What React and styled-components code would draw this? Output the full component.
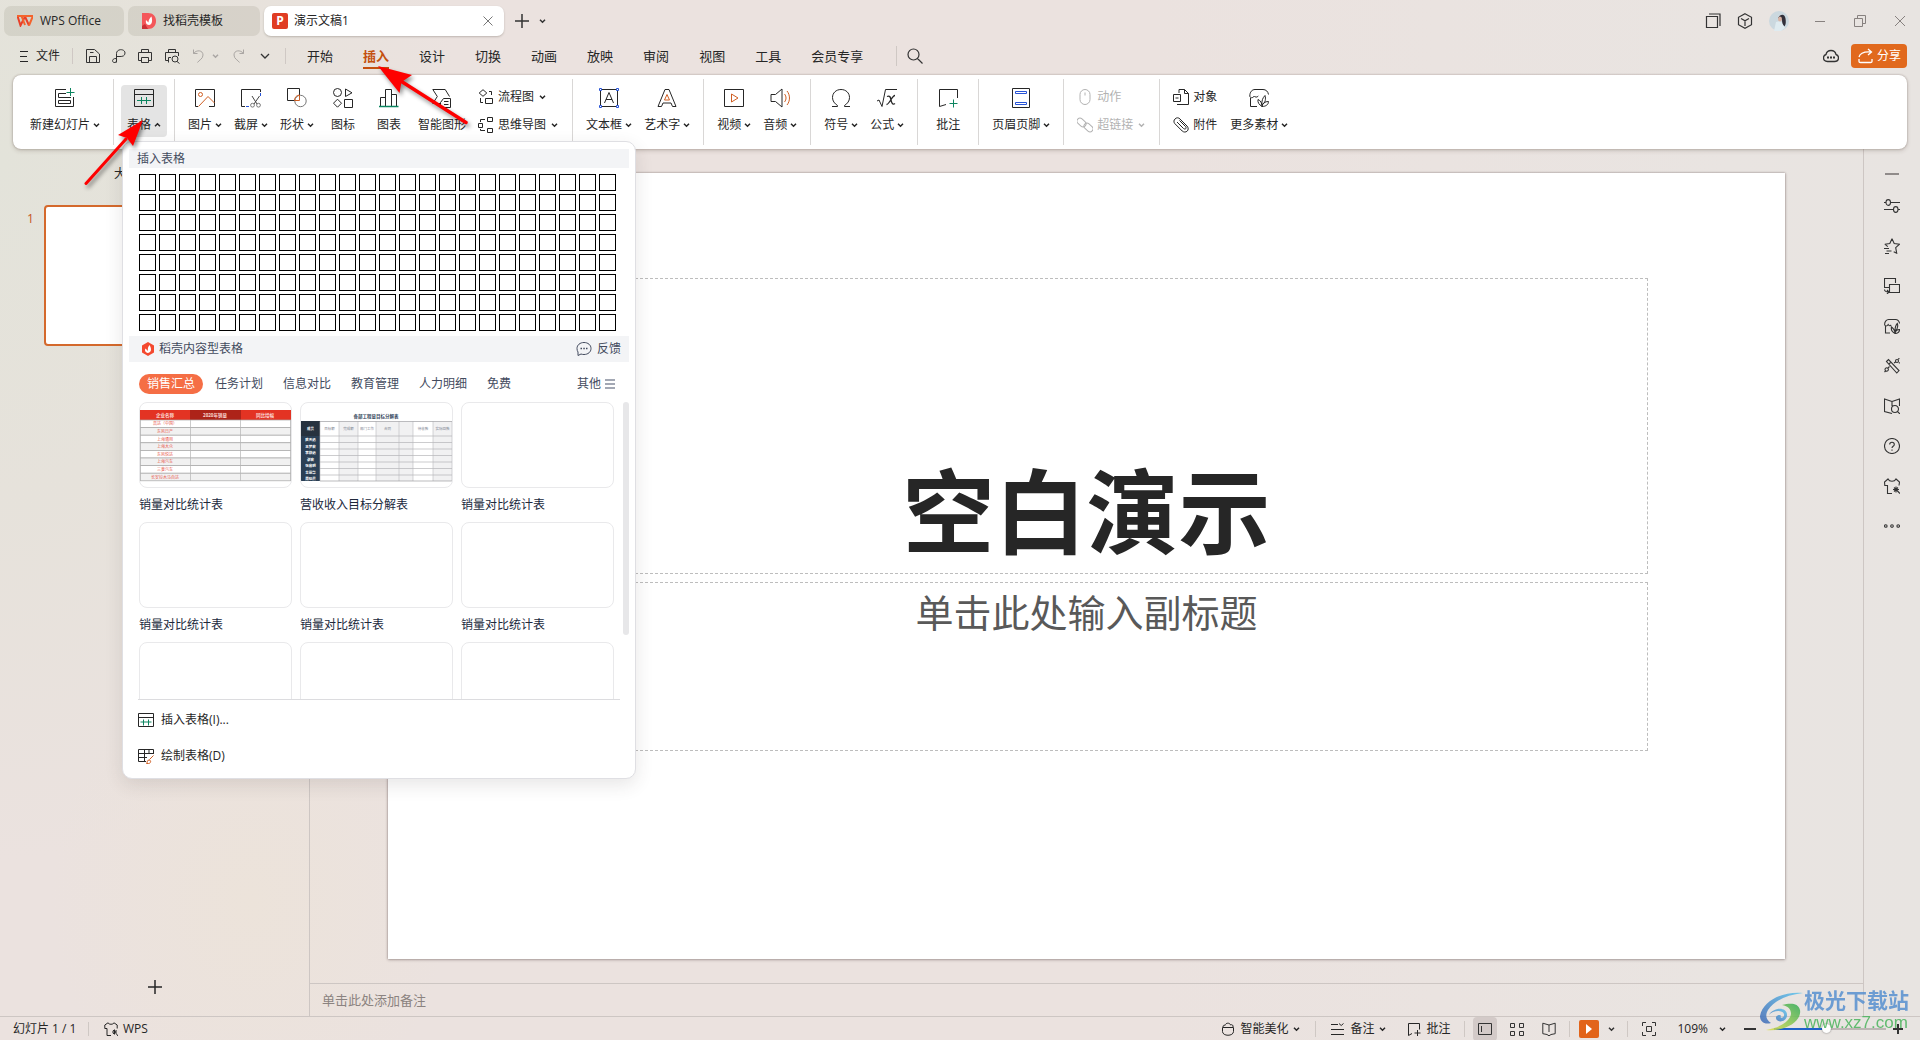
import React from "react";
import styled, { createGlobalStyle, css } from "styled-components";

const GlobalStyle = createGlobalStyle`
  * {
    box-sizing: border-box;
  }
  body {
    margin: 0;
    font-family: "Open Sans", "Noto Sans CJK SC", sans-serif;
    font-size: 12px;
    line-height: 16px;
    color: #262626;
  }
  button, input {
    font: inherit;
    color: inherit;
    border: none;
    background: none;
    padding: 0;
    margin: 0;
  }
  a {
    color: inherit;
    text-decoration: none;
  }
`;

const GREEN = "#0c8560";
const ORANGE = "#cf5e22";
const BLUE = "#2753d6";

const Svg = styled.svg`
  display: block;
  flex: none;
  fill: none;
  stroke: currentColor;
  stroke-width: ${(p) => p.$w || 1};
`;

const Icon = ({ size = 16, w, children }) => (
  <Svg width={size} height={size} viewBox={`0 0 ${size} ${size}`} $w={w} aria-hidden="true">
    {children}
  </Svg>
);

const Caret = ({ up }) => (
  <Svg width="7" height="6" viewBox="0 0 7 6" $w={1.5} aria-hidden="true">
    <path d={up ? "M1 4.2l2.5-2.4L6 4.2" : "M1 1.8l2.5 2.4L6 1.8"} />
  </Svg>
);

/* ---------- ribbon icons, 20 x 20 (16 x 16 for the stacked ones) ---------- */

const icons = {
  newSlide: (
    <>
      <path d="M11 1.5H.5v17h18V9M11 5.5H3.5v4H16M3.5 12.5h12v3h-12z" />
      <path stroke={GREEN} d="M15.5 0v8M11.5 4.5h8" />
    </>
  ),
  table: (
    <>
      <path d="M.5 1.5h19v17H.5zM.5 6.5h19" />
      <path stroke={GREEN} d="M3 12.5h14M7.5 9v7M12.500 9v7" />
    </>
  ),
  picture: (
    <>
      <path d="M3 18.5H.5v-17h19v17H14" />
      <circle cx="5.5" cy="6.5" r="2" stroke={ORANGE} />
      <path stroke={ORANGE} d="M3.5 18.5l9.5-10 6.5 6.5" />
    </>
  ),
  screenshot: (
    <>
      <path d="M4 18.5H.5v-17h19V4" />
      <path stroke={BLUE} d="M19.5 5v3M5 18.5h3" />
      <path d="M11 8l5 8M18.5 8L13 16" stroke="#444" />
      <circle cx="11.5" cy="17.2" r="1.9" stroke="#777" />
      <circle cx="17.5" cy="17.2" r="1.9" stroke="#777" />
    </>
  ),
  shapes: (
    <>
      <path d="M8 12.5H.5V.5h12V7" />
      <circle cx="13.5" cy="13" r="5.7" stroke="#777" />
      <path d="M7.5 12.5c0-3 2-5.3 5-5.5v5.5z" stroke={ORANGE} />
    </>
  ),
  glyphs: (
    <>
      <circle cx="4.5" cy="4.5" r="4" />
      <path d="M12.5 1v7.5L19 4.8zM4.5 11.2l4 4-4 4-4-4zM11.5 11.5h8v8h-8z" />
    </>
  ),
  chart: (
    <>
      <path d="M1.5 18V9.5h5M6.5 18V1.5h6V18M12.5 6.5h5V18" />
      <path stroke={GREEN} strokeWidth="1.5" d="M0 18.5h19.5" />
    </>
  ),
  smart: (
    <>
      <path d="M8 15.5H.8l4.5-7-4.500-7h12.400l4.300 7" />
      <path d="M8.5 14.5l3-4h7v9h-10zM12 13.5h4.500M12 16.5h4.500" />
    </>
  ),
  textBox: (
    <>
      <path d="M3 1.5h14M3 18.5h14M1.5 3v14M18.5 3v14M5.5 15L10 4.500 14.500 15M7 11.5h6" />
      <path stroke={BLUE} d="M.5.5h2v2h-2zM17.5.5h2v2h-2zM.5 17.5h2v2h-2zM17.5 17.5h2v2h-2z" />
    </>
  ),
  wordArt: (
    <>
      <path d="M1 18.5l7-17h4l7 17h-3.500L14 15H6l-1.500 3.500z" />
      <path stroke={ORANGE} d="M10 6.5l2.500 5.500h-5z" />
    </>
  ),
  video: (
    <>
      <path d="M.5 1.5h19v17H.5z" />
      <path stroke={ORANGE} d="M7.5 6l6.500 4-6.500 4z" />
    </>
  ),
  audio: (
    <>
      <path d="M1 6.5h4.500L12 1v18l-6.500-5.500H1z" />
      <path stroke={ORANGE} d="M14.5 6c2 2.4 2 5.6 0 8M17 3c3.3 4 3.3 10 0 14" />
    </>
  ),
  omega: (
    <path d="M1 18.5h5.500v-1c-3-2-5-4.500-5-8 0-4.500 3.500-8 8.500-8s8.500 3.500 8.500 8c0 3.500-2 6-5 8v1H19" />
  ),
  formula: (
    <>
      <path d="M0 13l2-1 3 6.500 3.500-17H20" />
      <path strokeWidth="1.3" d="M10 8.5c3-1.5 3.5 1 4 3.5s1.500 5.500 4 3.500M18 7.500c-3 0-5.500 9-8.500 9" />
    </>
  ),
  comment: (
    <>
      <path d="M8 16.500l-6.500 2v-17h18V10" />
      <path stroke={GREEN} d="M15.5 11.5v8M11.500 15.5h8" />
    </>
  ),
  headerFooter: (
    <>
      <path d="M1.5.5h17v19h-17z" />
      <path stroke={BLUE} d="M4.5 3.5h11v2h-11zM4.500 14.5h11v2h-11z" />
    </>
  ),
  store: (
    <>
      <path d="M.8 8C.8 4 3 1.5 6 1.5h8c3 0 5 2 5.500 5M.8 8c0 2 3 2.500 4.500 0 1 1.500 2.500 1.500 4 0M1.500 10v8.500H8" />
      <path d="M13 18.500c-3-2-4.500-4-4-7 2.500 1 4 3.500 4 7zM13 17c-.5-4 .5-7 3-9.500 1 3.500.5 7-3 9.500zM13 18.500c.5-3.500 3-5 6.500-5 0 3-2.500 5-6.500 5z" />
    </>
  ),
  flow: <path d="M5 .7L8.8 4 5 7.300 1.200 4zM11 2.5h2.500V6M2.500 9v4.500H5M7.500 9.500h7v5h-7z" />,
  mind: <path d="M9.5.5h5v4h-5zM9.500 11.5h5v4h-5zM.5 6.5h4v4h-4zM2.500 5V2.500H7M2.500 12v1.500H7" />,
  mouse: (
    <>
      <rect x="3" y=".5" width="10" height="15" rx="5" />
      <path d="M8 3.5v3" />
    </>
  ),
  link: (
    <>
      <rect x="-.5" y="2.5" width="10" height="6" rx="3" transform="rotate(42 4.5 5.5)" />
      <rect x="6.5" y="7.5" width="10" height="6" rx="3" transform="rotate(42 11.5 10.5)" />
    </>
  ),
  object: (
    <>
      <path d="M6 4V.5h5.500l4 4v11H4M11.500.5v4h4" />
      <path d="M.5 5.5h7v7h-7zM2.500 9h3" />
    </>
  ),
  clip: (
    <path d="M2 2c1.500-1.700 3.700-1.500 5 0l7 7c3.500 4-1.500 8-4.800 5L1.700 6.500C.5 5 .8 3 2 2zM4 5l6.500 6.500c2 1.500 3.500-.5 2-2l-6-6" />
  ),
};

/* ---------- title bar ---------- */

const Page = styled.div`
  min-height: 100vh;
  display: flex;
  flex-direction: column;
  position: relative;
  overflow: hidden;
  background:
    radial-gradient(ellipse 460px 700px at 0 160px, #e3e3da 0%, rgba(229, 226, 218, 0.8) 50%, rgba(235, 227, 224, 0) 100%),
    radial-gradient(ellipse 200px 240px at 250px 900px, #ece3da 0%, rgba(236, 227, 218, 0) 100%),
    linear-gradient(90deg, #ebe2df 0%, #ebe2df 60%, #e9e4e1 90%, #e8e4e1 100%);
`;

const TitleBar = styled.header`
  height: 40px;
  display: flex;
  align-items: center;
  padding: 2px 0 0 4px;
`;

const DocTab = styled.a`
  height: 30px;
  width: ${(p) => p.$width}px;
  margin-right: 4px;
  padding: 0 ${(p) => (p.$active ? 10 : 12)}px 0 ${(p) => p.$left}px;
  display: flex;
  align-items: center;
  gap: ${(p) => p.$gap}px;
  border-radius: 7px;
  background: ${(p) => (p.$active ? "#fff" : "rgba(120, 110, 95, 0.14)")};
  box-shadow: ${(p) => (p.$active ? "0 1px 2px rgba(60, 50, 40, 0.25)" : "none")};
`;

const Spacer = styled.div`
  flex: 1;
`;

const PptBadge = styled.span`
  width: 16px;
  height: 16px;
  border-radius: 2px;
  background: #e03c23;
  color: #fff;
  font-weight: 700;
  text-align: center;
`;

const IconButton = styled.button`
  width: ${(p) => p.$width || 24}px;
  height: 24px;
  display: flex;
  align-items: center;
  justify-content: center;
  flex: none;
  color: ${(p) => p.$color || "#333"};
  border-radius: 4px;
  background: ${(p) => p.$bg || "none"};
`;

/* ---------- menu bar ---------- */

const MenuBar = styled.nav`
  height: 32px;
  margin-bottom: 3px;
  padding: 0 13px 0 15px;
  display: flex;
  align-items: center;
`;

const FileButton = styled.button`
  display: flex;
  align-items: center;
  gap: 5px;
  padding: 0 12px 0 2px;
`;

const Divider = styled.span`
  width: 1px;
  height: ${(p) => p.$height || 16}px;
  margin: ${(p) => p.$margin || "0"};
  flex: none;
  background: #cfc8c4;
`;

const MenuTab = styled.a`
  position: relative;
  height: 32px;
  line-height: 32px;
  padding: 0 15px;
  font-size: 13px;
  ${(p) =>
    p.$active &&
    css`
      color: #c4500f;
      font-weight: 700;
      &::after {
        content: "";
        position: absolute;
        left: 15px;
        right: 15px;
        bottom: 3px;
        height: 2px;
        background: #c4500f;
      }
    `}
`;

const ShareButton = styled.button`
  height: 24px;
  padding: 0 6px;
  margin-left: 8px;
  display: flex;
  align-items: center;
  gap: 4px;
  border-radius: 4px;
  background: #e1691d;
  color: #fff;
`;

/* ---------- ribbon ---------- */

const Ribbon = styled.section`
  height: 74px;
  margin: 0 13px;
  padding: 4px 0;
  display: flex;
  border-radius: 8px;
  background: #fff;
  box-shadow: 0 0 2px rgba(80, 60, 50, 0.45), 0 2px 4px rgba(80, 60, 50, 0.2);
  position: relative;
  z-index: 5;
`;

const RibbonGroup = styled.div`
  display: flex;
  align-items: center;
  padding: 0 7px 2px;
  border-right: 1px solid #d9d7d6;
  &:first-child {
    padding-left: 11px;
  }
  &:last-child {
    border-right: none;
  }
`;

const RibbonButton = styled.button`
  min-width: 46px;
  height: 52px;
  padding: 3px 6px 0;
  display: flex;
  flex-direction: column;
  align-items: center;
  gap: 9px;
  border-radius: 4px;
  background: ${(p) => (p.$open ? "#e4e4e4" : "none")};
`;

const RibbonLabel = styled.span`
  display: flex;
  align-items: center;
  gap: ${(p) => (p.$wide ? 5 : 3)}px;
  white-space: nowrap;
`;

const RibbonStack = styled.div`
  display: flex;
  flex-direction: column;
  color: ${(p) => (p.$disabled ? "#b2b2b2" : "inherit")};
`;

const StackButton = styled.button`
  height: 28px;
  padding: 0 7px 0 6px;
  display: flex;
  align-items: center;
  gap: 4px;
  &:disabled {
    color: inherit;
  }
`;

const Tool = ({ icon, label, menu, open }) => (
  <RibbonButton $open={open}>
    <Icon size={20}>{icons[icon]}</Icon>
    <RibbonLabel>
      {label}
      {menu && <Caret up={open} />}
    </RibbonLabel>
  </RibbonButton>
);

const SmallTool = ({ icon, label, menu, disabled }) => (
  <StackButton disabled={disabled}>
    <Icon>{icons[icon]}</Icon>
    <RibbonLabel $wide>
      {label}
      {menu && <Caret />}
    </RibbonLabel>
  </StackButton>
);

/* ---------- table drop-down ---------- */

const MenuAnchor = styled.div`
  position: relative;
`;

const TablePanel = styled.div`
  position: absolute;
  top: calc(100% + 4px);
  left: 1px;
  width: 514px;
  height: 638px;
  padding: 7px 6px 0;
  border: 1px solid #dfdfe3;
  border-radius: 10px;
  background: #fff;
  box-shadow: 0 6px 18px rgba(60, 50, 50, 0.12);
`;

const PanelHeading = styled.h2`
  height: ${(p) => p.$height}px;
  margin: 0;
  padding: 0 8px;
  display: flex;
  align-items: center;
  font-size: 12px;
  font-weight: 400;
  background: #f3f4f6;
  color: #434b5e;
`;

const Feedback = styled.a`
  margin-left: auto;
  display: flex;
  align-items: center;
  gap: 5px;
`;

const CellGrid = styled.div`
  display: grid;
  grid-template-columns: repeat(24, 17px);
  grid-auto-rows: 17px;
  gap: 3px;
  padding: 6px 10px 5px;
`;

const Cell = styled.button`
  border: 1px solid #000;
`;

const Categories = styled.div`
  display: flex;
  align-items: center;
  gap: 4px;
  height: 40px;
  padding: 4px 14px 0 10px;
  color: #434b5e;
`;

const Category = styled.button`
  height: 20px;
  padding: 0 8px;
  border-radius: 10px;
  ${(p) =>
    p.$active &&
    css`
      background: #f56e45;
      color: #fff;
    `}
`;

const More = styled.button`
  margin-left: auto;
  display: flex;
  align-items: center;
  gap: 4px;
`;

const CardScroller = styled.div`
  height: 298px;
  margin: 0 9px;
  padding-left: 1px;
  overflow: hidden;
  border-bottom: 1px solid #dcdcdf;
  display: grid;
  grid-template-columns: repeat(3, 153px);
  grid-auto-rows: 112px;
  gap: 8px;
`;

const ScrollThumb = styled.div`
  position: absolute;
  right: 6px;
  top: 260px;
  width: 6px;
  height: 233px;
  border-radius: 3px;
  background: #e7e7e9;
`;

const Card = styled.figure`
  margin: 0;
`;

const CardPreview = styled.div`
  height: 86px;
  border: 1px solid #e9e9eb;
  border-radius: 8px;
  overflow: hidden;
`;

const CardName = styled.figcaption`
  height: 26px;
  padding-top: 9px;
  color: #20283b;
`;

const PanelActions = styled.div`
  padding: 2px 9px;
`;

const PanelAction = styled.button`
  height: 36px;
  display: flex;
  align-items: center;
  gap: 7px;
`;

const salesRows = ["高达（中国）", "东风日产", "上海通用", "上海大众", "东风悦达", "上海汽车", "三菱汽车", "长安铃木马自达"];
const goalRows = ["陈天迅", "王梦宏", "李静远", "谢宏", "张启明", "金丽华", "周晓晨"];
const goalCols = [19, 38, 57, 75, 98, 112, 132, 151];

const SalesPreview = () => (
  <svg width="151" height="84" viewBox="0 0 151 84" aria-hidden="true">
    <rect y="7" width="151" height="10" fill="#e33323" />
    <rect x="50" y="7" width="51" height="10" fill="#ad2319" />
    {["企业名称", "2020年销量", "同比增幅"].map((t, i) => (
      <text key={t} x={25 + i * 50} y="14" fontSize="4.5" fontWeight="700" fill="#fbd9d5" textAnchor="middle">
        {t}
      </text>
    ))}
    {salesRows.map((t, i) => (
      <g key={t}>
        <rect y={17 + i * 7.6} width="151" height="7.6" fill={i % 2 ? "#f1f1f1" : "#fff"} stroke="#a5a5a5" strokeWidth=".7" />
        <text x="25" y={22.4 + i * 7.6} fontSize="4" fill="#e8564a" textAnchor="middle">
          {t}
        </text>
      </g>
    ))}
    <path d="M.5 17v61M50.5 17v61M100.5 17v61M150.5 17v61" stroke="#b5b5b5" strokeWidth=".7" />
  </svg>
);

const GoalPreview = () => (
  <svg width="151" height="84" viewBox="0 0 151 84" aria-hidden="true">
    <text x="75" y="15" fontSize="4.5" fontWeight="700" fill="#34475d" textAnchor="middle">
      各部工程量目标分解表
    </text>
    <path d="M38 19h19v59H38zM75 19h37v59H75zM132 19h19v59h-19z" fill="#f1f1f2" />
    <rect y="18" width="19" height="15" fill="#27323f" />
    <rect y="33" width="19" height="45" fill="#2b3f55" />
    <text x="9.5" y="27" fontSize="3.5" fontWeight="700" fill="#fff" textAnchor="middle">
      成员
    </text>
    {goalRows.map((t, i) => (
      <g key={t}>
        <text x="9.5" y={38 + i * 6.5} fontSize="3.5" fontWeight="700" fill="#fff" textAnchor="middle">
          {t}
        </text>
        <path d={`M19 ${33 + i * 6.5}H151`} stroke="#a9a9ad" strokeWidth=".6" />
      </g>
    ))}
    {["目标额", "完成额", "部门工作", "合同", "", "待收款", "实际回款"].map((t, i) => (
      <text key={i} x={(goalCols[i] + goalCols[i + 1]) / 2} y="27" fontSize="3.5" fill="#7f8794" textAnchor="middle">
        {t}
      </text>
    ))}
    <path d={goalCols.map((x) => `M${x} 18.5V78`).join("")} stroke="#b9b9bd" strokeWidth=".6" />
    <path d="M19 18.5h132M19 78h132" stroke="#8d8d92" strokeWidth=".6" />
  </svg>
);

const cards = [
  { name: "销量对比统计表", preview: <SalesPreview /> },
  { name: "营收收入目标分解表", preview: <GoalPreview /> },
  { name: "销量对比统计表" },
  { name: "销量对比统计表" },
  { name: "销量对比统计表" },
  { name: "销量对比统计表" },
  {},
  {},
  {},
];

const TableMenu = () => (
  <TablePanel>
    <PanelHeading $height={19}>插入表格</PanelHeading>
    <CellGrid>
      {Array.from({ length: 192 }, (_, i) => (
        <Cell key={i} aria-label={`${Math.floor(i / 24) + 1} x ${(i % 24) + 1}`} />
      ))}
    </CellGrid>
    <PanelHeading $height={26}>
      <Svg width="22" height="16" viewBox="-5 0 22 16" aria-hidden="true">
        <path d="M6 1l6 3.5v7L6 15l-6-3.500v-7z" fill="#f4492f" stroke="none" />
        <path d="M6 12c-3-.5-3.500-3-2.500-4.500L6 10c-.5-2.500 0-4 1.500-6 2 3.500 2.500 7-1.500 8z" fill="#fff" stroke="none" />
      </Svg>
      稻壳内容型表格
      <Feedback href="#feedback">
        <Icon>
          <path d="M8 1.5c4 0 7 2.500 7 6s-3 6-7 6c-1 0-2-.1-3-.5l-3 1.500V11c-.7-1-1-2.200-1-3.500 0-3.500 3-6 7-6z" />
          <path strokeWidth="1.5" d="M4.5 7.5H6M7.300 7.5h1.500M10 7.5h1.500" />
        </Icon>
        反馈
      </Feedback>
    </PanelHeading>
    <Categories>
      {["销售汇总", "任务计划", "信息对比", "教育管理", "人力明细", "免费"].map((name, i) => (
        <Category key={name} $active={i === 0}>
          {name}
        </Category>
      ))}
      <More>
        其他
        <Svg width="10" height="12" viewBox="0 0 10 12" $w={2} aria-hidden="true">
          <path stroke="#a3a8b4" d="M0 2h10M0 6h10M0 10h10" />
        </Svg>
      </More>
    </Categories>
    <CardScroller>
      {cards.map((card, i) => (
        <Card key={i}>
          <CardPreview>{card.preview}</CardPreview>
          {card.name && <CardName>{card.name}</CardName>}
        </Card>
      ))}
    </CardScroller>
    <ScrollThumb />
    <PanelActions>
      <PanelAction>
        <Icon>
          <path d="M.5 1.5h15v13H.5zM.5 5.5h15" />
          <path stroke={GREEN} d="M2.5 10h11M5.500 7.500v6M10.500 7.500v6" />
        </Icon>
        插入表格(I)...
      </PanelAction>
      <PanelAction>
        <Icon>
          <path d="M15.5 6V1.500H.5v12H8M.5 5.500h15M.5 9.500H9M6.500 1.500v12M11 1.500v4" />
          <path stroke={ORANGE} d="M15.500 7.500l-4 4M8.500 15.500c1 0 0-3.500 2.500-3.500 2.500 0 2 3.500-.5 3.500z" />
        </Icon>
        绘制表格(D)
      </PanelAction>
    </PanelActions>
  </TablePanel>
);

/* ---------- work area ---------- */

const Workspace = styled.main`
  flex: 1;
  display: flex;
`;

const Outline = styled.aside`
  width: 310px;
  border-right: 1px solid #cdc6c3;
  display: flex;
  flex-direction: column;
`;

const OutlineTabs = styled.div`
  padding: 17px 0 0 114px;
  display: flex;
  gap: 48px;
`;

const ThumbRow = styled.div`
  display: flex;
  margin-top: 23px;
  padding: 0 15px 0 27px;
  gap: 11px;
`;

const ThumbNumber = styled.span`
  width: 6px;
  padding-top: 6px;
  color: #c4541d;
`;

const Thumb = styled.div`
  flex: 1;
  aspect-ratio: 16 / 9;
  border: 2px solid #d4692c;
  border-radius: 4px;
  background: #fff;
`;

const AddSlide = styled.button`
  height: 58px;
  margin-top: auto;
  display: flex;
  align-items: center;
  justify-content: center;
`;

const Editor = styled.div`
  flex: 1;
  display: flex;
  flex-direction: column;
`;

const Canvas = styled.div`
  flex: 1;
  padding: 24px 78px;
`;

const Slide = styled.article`
  aspect-ratio: 16 / 9;
  padding: 105px 137px 208px;
  display: grid;
  grid-template-rows: 295fr 169fr;
  gap: 8px;
  background: #fff;
  box-shadow: 0 0 2px rgba(70, 50, 50, 0.5), 0 1px 3px rgba(70, 50, 50, 0.25);
`;

const Placeholder = styled.div`
  display: flex;
  justify-content: center;
  align-items: ${(p) => p.$align};
  padding: 6px;
  border: 1px dashed #bdbdbd;
`;

const SlideTitle = styled.h1`
  margin: 0;
  font-size: 92px;
  line-height: 110px;
  color: #262626;
`;

const SlideSubtitle = styled.p`
  margin: 0;
  font-size: 38px;
  line-height: 46px;
  color: #595959;
`;

const Notes = styled.input`
  height: 33px;
  padding: 0 12px;
  border-top: 1px solid #cdc6c3;
  font-size: 13px;
  &::placeholder {
    color: #8b8380;
    opacity: 1;
  }
`;

const SideBar = styled.aside`
  width: 57px;
  border-left: 1px solid #cdc6c3;
  padding-top: 13px;
  display: flex;
  flex-direction: column;
  align-items: center;
  gap: 16px;
`;

const Collapse = styled.button`
  width: 24px;
  height: 24px;
  margin-bottom: -8px;
  display: flex;
  align-items: center;
  justify-content: center;
  color: #908b8a;
`;

/* ---------- status bar ---------- */

const StatusBar = styled.footer`
  height: 24px;
  border-top: 1px solid #cdc6c3;
  padding: 0 14px 0 13px;
  display: flex;
  align-items: center;
`;

const SlideCount = styled.span`
  min-width: 66px;
  word-spacing: normal;
`;

const StatusButton = styled.button`
  display: flex;
  align-items: center;
  gap: 5px;
  margin-right: ${(p) => p.$right || 0}px;
`;

const ViewButtons = styled.div`
  display: flex;
  gap: 8px;
`;

const PlayButton = styled.button`
  width: 20px;
  height: 18px;
  display: flex;
  align-items: center;
  justify-content: center;
  border-radius: 2px;
  background: #e2641a;
  color: #fff;
`;

const ZoomLevel = styled.button`
  display: flex;
  align-items: center;
  gap: 11px;
  margin: 0 12px 0 16px;
`;

const ZoomRange = styled.input`
  appearance: none;
  width: 112px;
  height: 12px;
  margin: 0 4px 0 12px;
  background: linear-gradient(90deg, #1f62c9 0 50px, #bdb6b4 50px) center / 100% 2px no-repeat;
  &::-webkit-slider-thumb {
    appearance: none;
    width: 9px;
    height: 9px;
    border-radius: 50%;
    background: #fff;
    box-shadow: 0 0 2px rgba(0, 0, 0, 0.5);
  }
`;

const Watermark = styled.div`
  position: absolute;
  right: 11px;
  bottom: 6px;
  display: flex;
  align-items: center;
  gap: 1px;
  opacity: 0.85;
  pointer-events: none;
`;

const WatermarkText = styled.div`
  font-family: "Liberation Sans", "Noto Sans CJK SC", sans-serif;
  font-size: 21px;
  font-weight: 700;
  line-height: 22px;
  color: #5790d0;
`;

const WatermarkUrl = styled.div`
  font-size: 17px;
  font-weight: 400;
  color: #4ab45c;
`;

const Arrows = styled.svg`
  position: absolute;
  left: 70px;
  top: 56px;
  z-index: 20;
  pointer-events: none;
  filter: drop-shadow(2px 3px 2px rgba(0, 0, 0, 0.45));
`;

const sideIcons = [
  ["设置", "M0 4.5h2M6.500 4.5H16M0 11.5h9M14 11.5h2M2 4.5a2.200 2.800 0 104.500 0 2.200 2.800 0 10-4.500 0M9.500 11.5a2.200 2.800 0 104.500 0 2.200 2.800 0 10-4.500 0"],
  ["动画", "M8 .8l2.200 4.700 5.300.7-3.800 3.500 1 5.500-3-1.500M.8 6.200l3 2.500M8 .8L5.800 5.500.8 6.200M0 10.500h5M2.500 13h5M1 15.500h4"],
  ["切换", "M5 9.500H.5v-9h11V5M5.500 6.500h10v8h-10zM.5 11.500c0 2 1.500 2.500 4 2.500M3 12l2 2-2 2"],
  ["素材", "M.6 6.500c0-3 2-5 4-5h7c2 0 3.500 1.500 4 4M.6 6.500c.4 2 2.500 2 3.600 0 1 1.500 2 1.500 3 .5M1.500 8v7H6M11 15.500C8 14 7 11 7.500 9c2 1.500 3.500 3.500 3.500 6.500zM11 13c0-3.500.8-6 2.300-7.500C14.500 9 13.500 11 11 13zM11 15.500c.5-3 2-4 4.500-4 0 2.500-2 4-4.500 4z"],
  ["工具", "M2.500 3.500l2-2 10.500 11-2.200 2.500zM5 6l2-2M1 11.500a1.700 1.700 0 103.400 0 1.700 1.700 0 10-3.400 0M11.500 3a1.500 1.500 0 103 0 1.500 1.500 0 10-3 0M10 5l1.500-1M4 10l1.500-1.500M14 1l1.500-.5M15 4.500l.8.800M.5 14l1-1"],
  ["查找", "M8 3.500L.5 1v12.500L8 15.500M8 3.500L15.500 1v7M8 3.500V8M7.500 11a3.500 3.500 0 107 0 3.500 3.500 0 10-7 0M13.500 13.500l2.500 2.500"],
  ["帮助", "M.5 8a7.500 7.500 0 1015 0 7.500 7.500 0 10-15 0M5.700 6.500c0-3 4.600-3 4.600 0 0 1.800-2.300 1.800-2.300 3.500M8 11.500v1.200"],
  ["外观", "M8 15.500H3.500v-8H.8L.5 4 4 1c1.500 3 6.500 3 8 0l3.500 3-.5 3.500M9 11.500h6M12 8.500v6M10 9.500l4 4M14 9.500l-4 4M14 13.500l2 2"],
  ["更多", "M.5 8a1.300 1.300 0 102.600 0 1.300 1.300 0 10-2.600 0M6.700 8a1.300 1.300 0 102.600 0 1.300 1.300 0 10-2.600 0M12.900 8a1.300 1.300 0 102.600 0 1.300 1.300 0 10-2.600 0"],
];

const App = () => (
  <>
    <GlobalStyle />
    <Page>
      <TitleBar>
        <DocTab href="#home" $width={120} $left={13} $gap={7}>
          <Svg width="16" height="12" viewBox="0 0 16 12" $w={2} aria-hidden="true">
            <path stroke="#e8402a" d="M.5 1l3 9.500L8 1.500l4 9" />
            <path stroke="#f4632c" d="M0 1h16l-4 9.500M4.500 1l3.500 9" />
          </Svg>
          WPS Office
        </DocTab>
        <DocTab href="#templates" $width={132} $left={14} $gap={7}>
          <Svg width="14" height="16" viewBox="0 0 14 16" aria-hidden="true">
            <path d="M0 0h6c5 0 8 3.500 8 8s-3 8-8 8H0z" fill="#f4575a" stroke="none" />
            <path d="M0 16v-3l3-2 3 5z" fill="#c93036" stroke="none" />
            <path d="M7 12c-3 0-3.500-3-3-5l2.500 2.500C6.500 7 7.500 5 9.500 3.500c1 4 1 8-2.500 8.500z" fill="#fff" stroke="none" />
          </Svg>
          找稻壳模板
        </DocTab>
        <DocTab href="#deck" $active $width={240} $left={8} $gap={6}>
          <PptBadge>P</PptBadge>
          演示文稿1
          <Spacer />
          <Icon size={12}>
            <path stroke="#777" d="M1.5 1.5l9 9M10.500 1.5l-9 9" />
          </Icon>
        </DocTab>
        <IconButton $width={28} aria-label="新建">
          <Icon size={14} w={1.5}>
            <path d="M7 0v14M0 7h14" />
          </Icon>
        </IconButton>
        <IconButton $width={12} aria-label="标签列表">
          <Caret />
        </IconButton>
        <Spacer />
        <IconButton $width={38} aria-label="工作区">
          <Icon w={1.2}>
            <path d="M1.5 3.5h11v11h-11zM4 1h11v12" />
          </Icon>
        </IconButton>
        <IconButton $width={26} aria-label="应用">
          <Icon w={1.2}>
            <path d="M8 .8l6.500 3.500v7.400L8 15.200l-6.500-3.500V4.300zM4 5.500l4 2.200 4-2.200M8 7.500V13" />
          </Icon>
        </IconButton>
        <IconButton $width={42} aria-label="账号">
          <Icon size={20}>
            <circle cx="10" cy="10" r="10" fill="#cbd8df" stroke="none" />
            <path d="M5 20l2-9 4-1 4 3 1 4-4 3z" fill="#dfebf0" stroke="none" />
            <path d="M11 4.500c3-2 5 0 5.500 3 .5 3 .5 6-1 8-2-2-2.500-4-2.500-6.500L9 7z" fill="#33303a" stroke="none" />
            <ellipse cx="11" cy="8" rx="2" ry="2.500" fill="#d9b3a4" stroke="none" />
          </Icon>
        </IconButton>
        <IconButton $width={40} $color="#87817f" aria-label="最小化">
          <Icon size={12}>
            <path d="M1 6.5h10" />
          </Icon>
        </IconButton>
        <IconButton $width={40} $color="#87817f" aria-label="还原">
          <Icon size={12}>
            <path d="M.5 3.5h8v8h-8zM3.500 3V.5h8v8H9" />
          </Icon>
        </IconButton>
        <IconButton $width={40} $color="#87817f" aria-label="关闭">
          <Icon size={12}>
            <path d="M1 1l10 10M11 1L1 11" />
          </Icon>
        </IconButton>
      </TitleBar>

      <MenuBar>
        <FileButton>
          <Icon size={14}>
            <path d="M3 2.5h8M3 7.5h7M3 12.5h8" />
          </Icon>
          文件
        </FileButton>
        <Divider $margin="0 7px 0 0" />
        <IconButton $width={26} aria-label="保存">
          <Icon>
            <path d="M1.5 14.5v-13h8l5 4.500v8.500zM4.500 14V8.500h7V14M5 4.500h3.500" />
          </Icon>
        </IconButton>
        <IconButton $width={26} aria-label="输出">
          <Icon>
            <path d="M5.5 14.5v-9c0-5 8.500-5 8.500-.5 0 3-2.500 3.500-5 3.500H5.500M5.500 10.500c-5-.5-5 4.500-1.500 4 2-.3 1.500-2 1.500-4" />
          </Icon>
        </IconButton>
        <IconButton $width={26} aria-label="打印">
          <Icon>
            <path d="M4.5 4.5v-3h7v3M4 12.500H1.500v-8h13v8H12M4.500 9.500h7v5h-7z" />
          </Icon>
        </IconButton>
        <IconButton $width={27} aria-label="打印预览">
          <Icon>
            <path d="M4.5 4.5v-3h7v3M4 12.500H1.500v-8h13V8M4.500 14.500v-5H7M8 11a3 3 0 106 0 3 3 0 10-6 0M13 13.500l2.500 2" />
          </Icon>
        </IconButton>
        <IconButton $width={26} $color="#aaa6a3" aria-label="撤销">
          <Icon>
            <path d="M3.5 1.5v4h4M3.500 5.500c3-4 9.500-3.500 9.500 1.500 0 4-4 5-5.500 7.500" />
          </Icon>
        </IconButton>
        <IconButton $width={8} $color="#aaa6a3" aria-label="撤销列表">
          <Caret />
        </IconButton>
        <IconButton $width={40} $color="#aaa6a3" aria-label="重做">
          <Icon>
            <path d="M12.5 1.5v4h-4M12.500 5.500C9.500 1.500 3 2 3 7c0 4 4 5 5.500 7.500" />
          </Icon>
        </IconButton>
        <IconButton $width={12} aria-label="更多命令">
          <Icon size={10} w={1.3}>
            <path d="M1 3l4 4 4-4" />
          </Icon>
        </IconButton>
        <Divider $margin="0 6px 0 14px" />
        {["开始", "插入", "设计", "切换", "动画", "放映", "审阅", "视图", "工具", "会员专享"].map((name) => (
          <MenuTab key={name} href={`#${name}`} $active={name === "插入"}>
            {name}
          </MenuTab>
        ))}
        <Divider $height={20} $margin="0 6px 0 18px" />
        <IconButton aria-label="搜索">
          <Icon w={1.2}>
            <path d="M1 6.5a5.500 5.500 0 1011 0 5.500 5.500 0 10-11 0M10.500 10.500l5 5" />
          </Icon>
        </IconButton>
        <Spacer />
        <IconButton aria-label="云同步">
          <Icon w={1.3}>
            <path d="M4.5 13.5c-3 0-4-2-4-3.700 0-2 1.200-3 2.500-3.300.5-2.500 2.500-4 5-4s4.500 1.500 5 4c1.300.3 2.500 1.300 2.500 3.300 0 1.700-1 3.700-4 3.700z" />
            <path strokeWidth="2" d="M4 9.500h2M7 9.500h2M10 9.500h2" />
          </Icon>
        </IconButton>
        <ShareButton>
          <Icon w={1.3}>
            <path d="M2 9c1-4 5-5.500 12-5M11 1l3.500 3L11 7M2 11v2.500c0 1 .5 1 1.500 1h10c1 0 1.500 0 1.500-1V11" />
          </Icon>
          分享
        </ShareButton>
      </MenuBar>

      <Ribbon>
        <RibbonGroup>
          <Tool icon="newSlide" label="新建幻灯片" menu />
        </RibbonGroup>
        <RibbonGroup>
          <MenuAnchor>
            <Tool icon="table" label="表格" menu open />
            <TableMenu />
          </MenuAnchor>
        </RibbonGroup>
        <RibbonGroup>
          <Tool icon="picture" label="图片" menu />
          <Tool icon="screenshot" label="截屏" menu />
          <Tool icon="shapes" label="形状" menu />
          <Tool icon="glyphs" label="图标" />
          <Tool icon="chart" label="图表" />
          <Tool icon="smart" label="智能图形" />
          <RibbonStack>
            <SmallTool icon="flow" label="流程图" menu />
            <SmallTool icon="mind" label="思维导图" menu />
          </RibbonStack>
        </RibbonGroup>
        <RibbonGroup>
          <Tool icon="textBox" label="文本框" menu />
          <Tool icon="wordArt" label="艺术字" menu />
        </RibbonGroup>
        <RibbonGroup>
          <Tool icon="video" label="视频" menu />
          <Tool icon="audio" label="音频" menu />
        </RibbonGroup>
        <RibbonGroup>
          <Tool icon="omega" label="符号" menu />
          <Tool icon="formula" label="公式" menu />
        </RibbonGroup>
        <RibbonGroup>
          <Tool icon="comment" label="批注" />
        </RibbonGroup>
        <RibbonGroup>
          <Tool icon="headerFooter" label="页眉页脚" menu />
        </RibbonGroup>
        <RibbonGroup>
          <RibbonStack $disabled>
            <SmallTool icon="mouse" label="动作" disabled />
            <SmallTool icon="link" label="超链接" menu disabled />
          </RibbonStack>
        </RibbonGroup>
        <RibbonGroup>
          <RibbonStack>
            <SmallTool icon="object" label="对象" />
            <SmallTool icon="clip" label="附件" />
          </RibbonStack>
          <Tool icon="store" label="更多素材" menu />
        </RibbonGroup>
      </Ribbon>

      <Workspace>
        <Outline>
          <OutlineTabs>
            <span>大纲</span>
            <span>幻灯片</span>
          </OutlineTabs>
          <ThumbRow>
            <ThumbNumber>1</ThumbNumber>
            <Thumb />
          </ThumbRow>
          <AddSlide aria-label="新建幻灯片">
            <Icon size={14} w={1.5}>
              <path d="M7 0v14M0 7h14" />
            </Icon>
          </AddSlide>
        </Outline>
        <Editor>
          <Canvas>
            <Slide>
              <Placeholder $align="flex-end">
                <SlideTitle>空白演示</SlideTitle>
              </Placeholder>
              <Placeholder $align="flex-start">
                <SlideSubtitle>单击此处输入副标题</SlideSubtitle>
              </Placeholder>
            </Slide>
          </Canvas>
          <Notes aria-label="备注" placeholder="单击此处添加备注" />
        </Editor>
        <SideBar>
          <Collapse aria-label="收起">
            <Icon w={2}>
              <path d="M1 8h14" />
            </Icon>
          </Collapse>
          {sideIcons.map(([name, d]) => (
            <IconButton key={name} aria-label={name}>
              <Icon w={1.1}>
                <path d={d} />
              </Icon>
            </IconButton>
          ))}
        </SideBar>
      </Workspace>

      <StatusBar>
        <SlideCount>幻灯片 1 / 1</SlideCount>
        <Divider $height={14} $margin="0 15px 0 9px" />
        <StatusButton>
          <Icon size={14}>
            <path d="M7 13.500H3v-7H.8V3L4 .8c1 2 5 2 6 0L13.200 3v3.500M8 10h5M10.500 7.500v5M9 8l3.500 4M12.500 8L9 12M12.500 12l1.500 2" />
          </Icon>
          WPS
        </StatusButton>
        <Spacer />
        <StatusButton $right={15}>
          <Icon size={14}>
            <path d="M1.5 5.5h11v4c0 5-11 5-11 0zM2 5c0-2 1.500-2 2-1.500.5-3 5-3 5.500-.5 1.500-1 3 .5 2.500 2" />
          </Icon>
          智能美化
          <Caret />
        </StatusButton>
        <Divider $margin="0 15px 0 0" />
        <StatusButton $right={21}>
          <Icon size={14}>
            <path d="M0 2.5h7M0 7.5h13M0 12.5h13M8 1.5l2.200 2 2.300-2" />
          </Icon>
          备注
          <Caret />
        </StatusButton>
        <StatusButton $right={14}>
          <Icon size={14}>
            <path d="M5 11.5l-3.500 2v-12h11v6M10.500 8v6M7.500 11h6" />
          </Icon>
          批注
        </StatusButton>
        <Divider $margin="0 8px 0 0" />
        <ViewButtons>
          <IconButton $bg="#d3cac8" aria-label="普通视图">
            <Icon size={14}>
              <path d="M.5 1.5h13v11H.5zM3.500 4v6" />
            </Icon>
          </IconButton>
          <IconButton aria-label="浏览视图">
            <Icon size={14}>
              <path d="M.5 1.5h4v4h-4zM9.500 1.5h4v4h-4zM.5 9.5h4v4h-4zM9.500 9.5h4v4h-4z" />
            </Icon>
          </IconButton>
          <IconButton aria-label="阅读视图">
            <Icon size={14}>
              <path d="M7 3L.8 1.200v10.500l4.200.8 2 1.300 2-1.300 4.200-.8V1.200zM7 3v7" />
            </Icon>
          </IconButton>
        </ViewButtons>
        <Divider $margin="0 9px 0 8px" />
        <PlayButton aria-label="播放">
          <svg width="8" height="10" viewBox="0 0 8 10" aria-hidden="true">
            <path d="M1 0l6 5-6 5z" fill="#fff" />
          </svg>
        </PlayButton>
        <IconButton aria-label="播放选项">
          <Caret />
        </IconButton>
        <Divider $margin="0 9px 0 4px" />
        <IconButton aria-label="适应窗口">
          <Icon size={14}>
            <path d="M.5 4V.5H4M10 .5h3.500V4M13.500 10v3.500H10M4 13.500H.5V10M4.500 4.500h5v5h-5z" />
          </Icon>
        </IconButton>
        <ZoomLevel>
          109%
          <Caret />
        </ZoomLevel>
        <IconButton aria-label="缩小">
          <Icon size={12} w={2}>
            <path d="M0 6h12" />
          </Icon>
        </IconButton>
        <ZoomRange type="range" min="0" max="100" defaultValue="47" aria-label="缩放" />
        <IconButton $width={16} aria-label="放大">
          <Icon size={12} w={2}>
            <path d="M6 1v10M1 6h10" />
          </Icon>
        </IconButton>
      </StatusBar>

      <Watermark>
        <svg width="43" height="40" viewBox="0 0 43 40" aria-hidden="true">
          <defs>
            <linearGradient id="wmBlue" x1="0" y1="1" x2="1" y2="0">
              <stop offset="0" stopColor="#3f68b5" />
              <stop offset="1" stopColor="#5fc6ee" />
            </linearGradient>
            <linearGradient id="wmGreen" x1="0" y1="1" x2="1" y2="0">
              <stop offset="0" stopColor="#e3e04c" />
              <stop offset="1" stopColor="#2fab57" />
            </linearGradient>
          </defs>
          <path d="M43 1C24-1 3 8 0 24c0 6 5 9 11 7-5-3-6-8-3-13C14 9 26 3 43 1z" fill="url(#wmBlue)" />
          <path d="M9 23c4-8 19-9 18 1-1 7-12 7-11 1 2-3 5-2 5-1-2 3 4 2 3-2-2-5-12-3-15 1z" fill="url(#wmBlue)" />
          <path d="M22 13c9-2 16-2 18 5 2 10-13 22-34 20 12-2 24-8 25-16 0-5-3-8-9-9z" fill="url(#wmGreen)" />
        </svg>
        <WatermarkText>
          极光下载站
          <WatermarkUrl>www.xz7.com</WatermarkUrl>
        </WatermarkText>
      </Watermark>

      <Arrows width="410" height="140" viewBox="70 56 410 140" aria-hidden="true">
        <path d="M86 183.500L126 139" stroke="#fe0000" strokeWidth="3" strokeLinecap="round" />
        <path d="M143 120l-10 26-6-8-9-3z" fill="#fe0000" />
        <path d="M466 122.500L400 80.500" stroke="#fe0000" strokeWidth="3.5" strokeLinecap="round" />
        <path d="M378 66l34 9-10.500 7-2 11z" fill="#fe0000" />
      </Arrows>
    </Page>
  </>
);

export default App;
